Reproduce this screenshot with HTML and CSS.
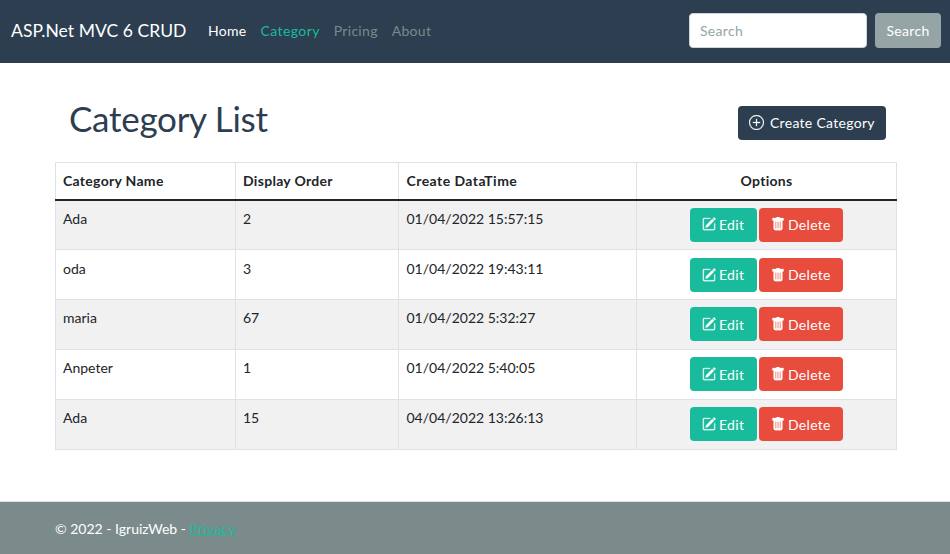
FILE: index.html
```html
<!DOCTYPE html>
<html lang="en">
<head>
<meta charset="utf-8">
<title>Category List</title>
<link rel="stylesheet" href="styles.css">
</head>
<body>
<svg class="sprite" aria-hidden="true">
  <symbol id="plus" viewBox="0 0 16 16"><path d="M8 15A7 7 0 1 1 8 1a7 7 0 0 1 0 14zm0 1A8 8 0 1 0 8 0a8 8 0 0 0 0 16z"/><path d="M8 4a.5.5 0 0 1 .5.5v3h3a.5.5 0 0 1 0 1h-3v3a.5.5 0 0 1-1 0v-3h-3a.5.5 0 0 1 0-1h3v-3A.5.5 0 0 1 8 4z"/></symbol>
  <symbol id="pencil" viewBox="0 0 16 16"><path d="M15.502 1.94a.5.5 0 0 1 0 .706L14.459 3.69l-2-2L13.502.646a.5.5 0 0 1 .707 0l1.293 1.293zm-1.75 2.456-2-2L4.939 9.21a.5.5 0 0 0-.121.196l-.805 2.414a.25.25 0 0 0 .316.316l2.414-.805a.5.5 0 0 0 .196-.12l6.813-6.814z"/><path fill-rule="evenodd" d="M1 13.5A1.5 1.5 0 0 0 2.5 15h11a1.5 1.5 0 0 0 1.5-1.5v-6a.5.5 0 0 0-1 0v6a.5.5 0 0 1-.5.5h-11a.5.5 0 0 1-.5-.5v-11a.5.5 0 0 1 .5-.5H9a.5.5 0 0 0 0-1H2.500A1.5 1.5 0 0 0 1 2.5v11z"/></symbol>
  <symbol id="trash" viewBox="0 0 16 16"><path d="M2.5 1a1 1 0 0 0-1 1v1a1 1 0 0 0 1 1H3v9a2 2 0 0 0 2 2h6a2 2 0 0 0 2-2V4h.5a1 1 0 0 0 1-1V2a1 1 0 0 0-1-1H10a1 1 0 0 0-1-1H7a1 1 0 0 0-1 1H2.500zm3 4a.5.5 0 0 1 .5.5v7a.5.5 0 0 1-1 0v-7a.5.5 0 0 1 .5-.5zM8 5a.5.5 0 0 1 .5.5v7a.5.5 0 0 1-1 0v-7A.5.5 0 0 1 8 5zm3 .5v7a.5.5 0 0 1-1 0v-7a.5.5 0 0 1 1 0z"/></symbol>
</svg>
<nav class="navbar">
  <a class="brand">ASP.Net MVC 6 CRUD</a>
  <div class="links"><a class="active">Home</a><a class="current">Category</a><a>Pricing</a><a>About</a></div>
  <form class="search"><input type="text" placeholder="Search"><button type="button">Search</button></form>
</nav>
<main class="container">
  <header class="heading">
    <h1>Category List</h1>
    <a class="btn create"><svg><use href="#plus"/></svg>Create Category</a>
  </header>
  <table>
    <colgroup><col class="name"><col class="order"><col class="date"><col class="options"></colgroup>
    <thead><tr><th>Category Name</th><th>Display Order</th><th>Create DataTime</th><th class="actions">Options</th></tr></thead>
    <tbody>
      <tr><td>Ada</td><td>2</td><td>01/04/2022 15:57:15</td><td class="actions"><div class="group"><a class="btn edit"><svg><use href="#pencil"/></svg>Edit</a><a class="btn delete"><svg><use href="#trash"/></svg>Delete</a></div></td></tr>
      <tr><td>oda</td><td>3</td><td>01/04/2022 19:43:11</td><td class="actions"><div class="group"><a class="btn edit"><svg><use href="#pencil"/></svg>Edit</a><a class="btn delete"><svg><use href="#trash"/></svg>Delete</a></div></td></tr>
      <tr><td>maria</td><td>67</td><td>01/04/2022 5:32:27</td><td class="actions"><div class="group"><a class="btn edit"><svg><use href="#pencil"/></svg>Edit</a><a class="btn delete"><svg><use href="#trash"/></svg>Delete</a></div></td></tr>
      <tr><td>Anpeter</td><td>1</td><td>01/04/2022 5:40:05</td><td class="actions"><div class="group"><a class="btn edit"><svg><use href="#pencil"/></svg>Edit</a><a class="btn delete"><svg><use href="#trash"/></svg>Delete</a></div></td></tr>
      <tr><td>Ada</td><td>15</td><td>04/04/2022 13:26:13</td><td class="actions"><div class="group"><a class="btn edit"><svg><use href="#pencil"/></svg>Edit</a><a class="btn delete"><svg><use href="#trash"/></svg>Delete</a></div></td></tr>
    </tbody>
  </table>
</main>
<footer class="footer"><div class="container">© 2022 - IgruizWeb - <a>Privacy</a></div></footer>
</body>
</html>
```
FILE: styles.css
```css
* { box-sizing: border-box; }
body { margin: 0; height: 554px; display: flex; flex-direction: column; overflow: hidden; background: #fff; color: #212529; font: 14px/21px Lato, sans-serif; font-variant-ligatures: none; }
.sprite { display: none; }
.navbar { height: 63px; flex: none; display: flex; align-items: center; padding: 0 9px 2px 11px; background: #2c3e50; color: #fff; }
.brand { width: 190px; font-size: 17.5px; letter-spacing: 0.05px; white-space: nowrap; }
.links { display: flex; gap: 14px; padding-left: 7px; color: #7b8a8b; letter-spacing: 0.3px; }
.links .active { color: #fff; }
.links .current { color: #18bc9c; letter-spacing: 0.4px; }
.search { display: flex; gap: 8px; margin-left: auto; }
.search input { width: 178px; height: 35px; border: 1px solid #ced4da; border-radius: 4px; padding: 0 10px; font: inherit; letter-spacing: 0.3px; }
.search input::placeholder { color: #95a5a6; opacity: 1; }
.search button { width: 66px; height: 35px; border: 0; border-radius: 4px; padding: 0; background: #95a5a6; color: #fff; font: inherit; letter-spacing: 0.3px; }
.container { width: 842px; margin-left: 55px; }
.heading { height: 99px; display: flex; justify-content: space-between; padding: 34px 11px 0 14px; }
h1 { margin: 0; font-size: 35px; line-height: 42px; font-weight: 400; letter-spacing: -0.27px; color: #2c3e50; }
.btn { display: inline-flex; align-items: center; height: 34px; border-radius: 4px; padding-bottom: 1px; color: #fff; letter-spacing: 0.3px; white-space: nowrap; }
.btn svg { width: 14px; height: 14px; fill: currentColor; stroke: currentColor; stroke-width: 0.3; flex: none; }
.create { width: 148px; margin-top: 9px; padding-left: 11px; gap: 6px; background: #2c3e50; }
.create svg { width: 15px; height: 15px; overflow: visible; }
table { width: 842px; table-layout: fixed; border-collapse: collapse; }
.name { width: 180px; }
.order { width: 163px; }
.date { width: 238px; }
.options { width: 260px; }
th, td { border: 1px solid #dee2e6; padding: 7px; text-align: left; vertical-align: top; }
th { height: 37px; font-weight: 700; letter-spacing: 0.3px; }
th:nth-child(3) { letter-spacing: 0.45px; }
th:nth-child(3), td:nth-child(3) { padding-left: 7.5px; }
tbody { border-top: 2px solid #212529; }
td { height: 50px; }
tbody tr:nth-child(2) td { padding-top: 8px; }
tbody tr:nth-child(odd) { background: #f1f1f1; }
th.actions { text-align: center; }
td.actions { padding: 7px 0 0; }
.group { display: flex; justify-content: center; gap: 2px; }
.edit { width: 67px; padding-left: 12px; gap: 3px; background: #18bc9c; }
.delete { width: 84px; padding-left: 12px; gap: 3px; background: #e74c3c; }
tr:nth-child(n+3) .btn { padding-bottom: 0; }
.footer { height: 53px; flex: none; margin-top: auto; border-top: 1px solid #dee2e6; padding-top: 16px; background: #7b8a8b; color: #fff; }
.footer a { color: #18bc9c; text-decoration: underline; letter-spacing: 0.3px; }
```
